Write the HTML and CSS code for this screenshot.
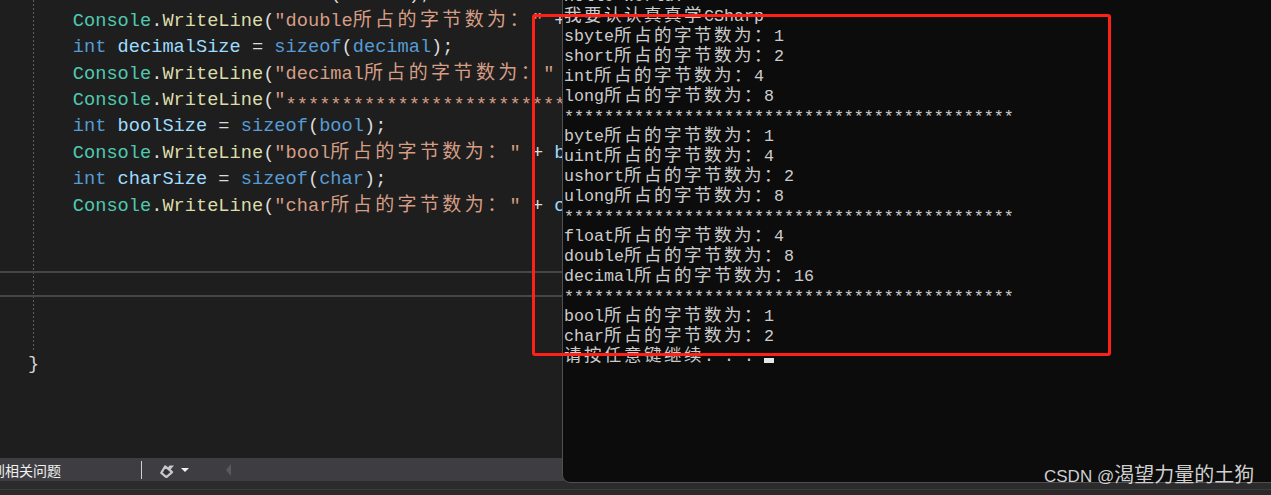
FILE: index.html
```html
<!DOCTYPE html>
<html lang="zh-CN">
<head>
    <meta charset="UTF-8">
    <meta name="viewport" content="width=device-width, initial-scale=1.0">
    <title>sizeof - Visual Studio</title>
    <link rel="stylesheet" href="styles.css">
</head>
<body>
    <div class="ide">
        <div class="editor">
            <div class="code">
                <div class="block">
                    <div class="line"><span class="kw">int</span> <span class="var">doubleSize</span> = <span class="kw">sizeof</span>(<span class="kw">double</span>);</div>
                    <div class="line"><span class="type">Console</span>.<span class="fn">WriteLine</span>(<span class="str">"double<span class="cn">所占的字节数为：</span>"</span> + <span class="var">doubleSize</span>);</div>
                    <div class="line"><span class="kw">int</span> <span class="var">decimalSize</span> = <span class="kw">sizeof</span>(<span class="kw">decimal</span>);</div>
                    <div class="line"><span class="type">Console</span>.<span class="fn">WriteLine</span>(<span class="str">"decimal<span class="cn">所占的字节数为：</span>"</span> + <span class="var">decimalSize</span>);</div>
                    <div class="line"><span class="type">Console</span>.<span class="fn">WriteLine</span>(<span class="str">"<span class="stars">*********************************************</span>"</span>);</div>
                    <div class="line"><span class="kw">int</span> <span class="var">boolSize</span> = <span class="kw">sizeof</span>(<span class="kw">bool</span>);</div>
                    <div class="line"><span class="type">Console</span>.<span class="fn">WriteLine</span>(<span class="str">"bool<span class="cn">所占的字节数为：</span>"</span> + <span class="var">boolSize</span>);</div>
                    <div class="line"><span class="kw">int</span> <span class="var">charSize</span> = <span class="kw">sizeof</span>(<span class="kw">char</span>);</div>
                    <div class="line"><span class="type">Console</span>.<span class="fn">WriteLine</span>(<span class="str">"char<span class="cn">所占的字节数为：</span>"</span> + <span class="var">charSize</span>);</div>
                    <div class="line"></div>
                    <div class="line"></div>
                    <div class="line current"></div>
                    <div class="line"></div>
                    <div class="line"></div>
                </div>
                <div class="line brace">}</div>
            </div>
        </div>

        <div class="status">
            <span class="problems">到相关问题</span>
            <span class="sep"></span>
            <svg class="brush" width="16" height="16" viewBox="0 0 16 16">
                <g transform="rotate(40 8 8)">
                    <path d="M3.5 7h9l-1.2 7.5H4.7z" fill="#333337" stroke="#c8c8c8" stroke-width="2.2" stroke-linejoin="round"/>
                    <path d="M6.3 7V3.5l3.4-2.8V7z" fill="#c8c8c8"/>
                </g>
            </svg>
            <span class="drop"></span>
            <span class="back"></span>
        </div>
        <div class="footer"></div>

        <div class="terminal">
            <div class="console">
                <div class="row">Hello World!</div>
                <div class="row"><span class="cn">我要认认真真学</span>CSharp</div>
                <div class="row">sbyte<span class="cn">所占的字节数为：</span>1</div>
                <div class="row">short<span class="cn">所占的字节数为：</span>2</div>
                <div class="row">int<span class="cn">所占的字节数为：</span>4</div>
                <div class="row">long<span class="cn">所占的字节数为：</span>8</div>
                <div class="row"><span class="stars">*********************************************</span></div>
                <div class="row">byte<span class="cn">所占的字节数为：</span>1</div>
                <div class="row">uint<span class="cn">所占的字节数为：</span>4</div>
                <div class="row">ushort<span class="cn">所占的字节数为：</span>2</div>
                <div class="row">ulong<span class="cn">所占的字节数为：</span>8</div>
                <div class="row"><span class="stars">*********************************************</span></div>
                <div class="row">float<span class="cn">所占的字节数为：</span>4</div>
                <div class="row">double<span class="cn">所占的字节数为：</span>8</div>
                <div class="row">decimal<span class="cn">所占的字节数为：</span>16</div>
                <div class="row"><span class="stars">*********************************************</span></div>
                <div class="row">bool<span class="cn">所占的字节数为：</span>1</div>
                <div class="row">char<span class="cn">所占的字节数为：</span>2</div>
                <div class="row"><span class="cn">请按任意键继续</span>. . . <span class="cursor"></span></div>
            </div>
        </div>

        <div class="highlight"></div>
        <div class="watermark">CSDN @<span class="cn">渴望力量的土狗</span></div>
    </div>
</body>
</html>
```

FILE: styles.css
```css
* {
    box-sizing: border-box;
}
body {
    margin: 0;
    background: #1e1e1e;
    overflow: hidden;
}
.ide {
    position: relative;
    height: 495px;
    display: flex;
    flex-direction: column;
    overflow: hidden;
}

/* editor */
.editor {
    height: 458px;
    flex: none;
    overflow: hidden;
    background: #1e1e1e;
}
.code {
    margin-top: -19.6px;
    padding-left: 28px;
    font-family: "Liberation Mono", monospace;
    font-size: 18.67px;
    color: #dcdcdc;
}
.block {
    margin-left: 5px;
    padding-left: 39.8px;
    background: repeating-linear-gradient(to bottom, #5e5e5e 0 2px, transparent 2px 4px) left top / 1px 100% no-repeat;
}
.line {
    height: 26.4px;
    line-height: 28.8px;
    white-space: pre;
}
.line .cn {
    font-family: "Noto Sans CJK SC", sans-serif;
    font-size: 19px;
    letter-spacing: 3.4px;
    line-height: 0;
}
.line .stars {
    vertical-align: -5px;
    line-height: 0;
}
.current {
    margin-left: -72.8px;
    border-top: 2px solid #464646;
    border-bottom: 2px solid #464646;
}
.brace { color: #d4d4d4; }
.kw { color: #569cd6; }
.type { color: #4ec9b0; }
.fn { color: #dcdcaa; }
.str { color: #d69d85; }
.var { color: #9cdcfe; }

/* status bar */
.status {
    height: 23px;
    flex: none;
    display: flex;
    align-items: center;
    background: #3e3e42;
    font-family: "Noto Sans CJK SC", sans-serif;
    font-size: 14px;
    color: #f1f1f1;
}
.problems {
    margin-left: -9px;
    white-space: nowrap;
}
.sep {
    width: 1px;
    height: 18px;
    margin-left: 80px;
    background: #cfcfcf;
}
.brush {
    margin-left: 18px;
}
.drop {
    margin-left: 5px;
    border-left: 4px solid transparent;
    border-right: 4px solid transparent;
    border-top: 4px solid #f1f1f1;
}
.back {
    margin-left: 37px;
    border-top: 6px solid transparent;
    border-bottom: 6px solid transparent;
    border-right: 5px solid #5a5a5e;
}
.footer {
    flex: 1;
    background: linear-gradient(#2b2b2c 0 8px, #3b3b3d 8px 9px, #2a2a2b 9px);
}

/* console window */
.terminal {
    position: absolute;
    left: 562px;
    top: -1px;
    right: -1px;
    bottom: 12px;
    background: #0c0c0c;
    border: 1px solid #505050;
    border-radius: 0 0 0 8px;
    overflow: hidden;
    z-index: 2;
}
.console {
    margin-top: -15px;
    padding-left: 1px;
    font-family: "Liberation Mono", monospace;
    font-size: 16.67px;
    color: #cccccc;
}
.row {
    height: 20px;
    line-height: 24px;
    white-space: pre;
}
.row .cn {
    font-family: "Noto Sans CJK SC", sans-serif;
    font-size: 17.5px;
    letter-spacing: 2.5px;
    line-height: 0;
}
.row .stars {
    vertical-align: -1px;
    line-height: 0;
}
.cursor {
    display: inline-block;
    width: 10px;
    height: 5px;
    vertical-align: -2px;
    line-height: 0;
    background: #e6e6e6;
}

/* annotation */
.highlight {
    position: absolute;
    left: 532px;
    top: 14px;
    width: 579px;
    height: 342px;
    border: 3px solid #fd2117;
    border-radius: 3px;
    z-index: 3;
}
.watermark {
    position: absolute;
    left: 1044px;
    top: 464px;
    font-family: "Liberation Sans", "Noto Sans CJK SC", sans-serif;
    font-size: 17px;
    line-height: 20px;
    color: #cfcfcf;
    white-space: nowrap;
    z-index: 4;
}
.watermark .cn {
    font-family: "Noto Sans CJK SC", sans-serif;
    font-size: 20px;
}
```
